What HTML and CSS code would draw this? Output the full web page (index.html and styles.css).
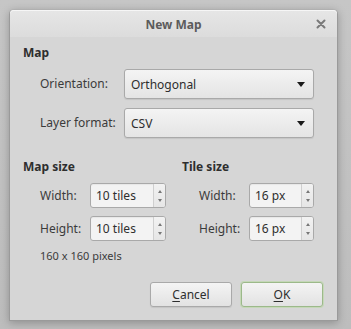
FILE: index.html
```html
<!DOCTYPE html>
<html>
<head>
<meta charset="utf-8">
<link rel="stylesheet" href="styles.css">
</head>
<body>
<div class="window">
  <div class="titlebar">
    <span class="title">New Map</span>
    <span class="close">
      <svg width="10" height="10" viewBox="0 0 10 10"><path d="M1.5 1.5 L8.5 8.5 M8.5 1.5 L1.5 8.5" stroke="#7a7a7a" stroke-width="2" stroke-linecap="round"/></svg>
    </span>
  </div>
  <div class="content">
    <div class="heading">Map</div>
    <div class="map-form">
      <span class="label">Orientation:</span>
      <div class="combo"><span>Orthogonal</span><span class="arrow"></span></div>
      <span class="label">Layer format:</span>
      <div class="combo"><span>CSV</span><span class="arrow"></span></div>
    </div>
    <div class="sizes">
      <div class="size-group">
        <div class="heading">Map size</div>
        <div class="size-form">
          <span class="label">Width:</span>
          <div class="spin wide"><span class="val">10 tiles</span><span class="btns"><span class="up"></span><span class="down"></span></span></div>
          <span class="label">Height:</span>
          <div class="spin wide"><span class="val">10 tiles</span><span class="btns"><span class="up"></span><span class="down"></span></span></div>
        </div>
      </div>
      <div class="size-group">
        <div class="heading">Tile size</div>
        <div class="size-form">
          <span class="label">Width:</span>
          <div class="spin"><span class="val">16 px</span><span class="btns"><span class="up"></span><span class="down"></span></span></div>
          <span class="label">Height:</span>
          <div class="spin"><span class="val">16 px</span><span class="btns"><span class="up"></span><span class="down"></span></span></div>
        </div>
      </div>
    </div>
    <div class="pixels">160 x 160 pixels</div>
    <div class="buttons">
      <button class="btn"><u>C</u>ancel</button>
      <button class="btn default"><u>O</u>K</button>
    </div>
  </div>
</div>
</body>
</html>
```

FILE: styles.css
```css
html, body {
  margin: 0;
  padding: 0;
}
body {
  width: 351px;
  height: 329px;
  background: linear-gradient(180deg, #c6c6c6 0%, #bdbdbd 100%);
  font-family: "Noto Sans", "Open Sans", sans-serif;
  font-size: 12px;
  color: #3b3b3b;
  padding: 9px 13px 8px 9px;
  box-sizing: border-box;
}
.window {
  width: 329px;
  height: 312px;
  background: #d6d6d6;
  border: 1px solid #9a9a9a;
  border-top-color: #b0b0b0;
  border-radius: 5px 5px 0 0;
  box-sizing: border-box;
  box-shadow: 0 2px 8px rgba(0,0,0,0.25);
  display: flex;
  flex-direction: column;
}
.titlebar {
  height: 27px;
  display: flex;
  align-items: center;
  justify-content: center;
  position: relative;
  background: linear-gradient(180deg, #e6e6e6 0%, #dcdcdc 100%);
  border-radius: 4px 4px 0 0;
  box-shadow: inset 0 1px 0 #f6f6f6;
}
.title {
  font-weight: bold;
  font-size: 12px;
  color: #5c5c5c;
  padding-top: 1px;
}
.close {
  position: absolute;
  right: 11px;
  top: 9px;
  width: 10px;
  height: 10px;
  display: flex;
}
.content {
  padding: 8px 14px 13px 13px;
  display: flex;
  flex-direction: column;
  flex: 1;
}
.heading {
  font-weight: bold;
  line-height: 16px;
  color: #2e2e2e;
}
.map-form {
  display: grid;
  grid-template-columns: 84px 190px;
  row-gap: 9px;
  align-items: center;
  margin: 8px 0 0 17px;
}
.label {
  color: #3b3b3b;
  line-height: 16px;
}
.combo {
  height: 30px;
  box-sizing: border-box;
  border: 1px solid #a9a9a9;
  border-radius: 3px;
  background: linear-gradient(180deg, #f4f4f4 0%, #e4e4e4 100%);
  box-shadow: 0 1px 1px rgba(0,0,0,0.08);
  display: flex;
  align-items: center;
  justify-content: space-between;
  padding: 0 8px 0 6px;
  color: #2e2e2e;
}
.arrow {
  width: 0;
  height: 0;
  border-left: 4px solid transparent;
  border-right: 4px solid transparent;
  border-top: 5px solid #1a1a1a;
  margin-top: 1px;
}
.sizes {
  display: flex;
  margin-top: 21px;
}
.size-group {
  flex: 0 0 159px;
}
.size-group + .size-group {
  flex: 1 1 auto;
}
.size-form {
  display: grid;
  grid-template-columns: 50px auto;
  row-gap: 8px;
  align-items: center;
  margin: 8px 0 0 17px;
  justify-content: start;
}
.spin {
  width: 65px;
  height: 25px;
  box-sizing: border-box;
  border: 1px solid #a9a9a9;
  border-radius: 3px;
  background: #f3f3f3;
  display: flex;
  align-items: stretch;
  box-shadow: inset 0 1px 1px rgba(0,0,0,0.05);
}
.spin.wide {
  width: 76px;
}
.val {
  flex: 1;
  display: flex;
  align-items: center;
  padding-left: 5px;
  color: #2e2e2e;
}
.btns {
  width: 12px;
  border-left: 1px solid #cfcfcf;
  background: linear-gradient(180deg, #f2f2f2 0%, #e6e6e6 100%);
  border-radius: 0 2px 2px 0;
  display: flex;
  flex-direction: column;
  align-items: center;
  justify-content: space-between;
  padding: 6px 0 5px;
  box-sizing: border-box;
}
.up {
  width: 0; height: 0;
  border-left: 2px solid transparent;
  border-right: 2px solid transparent;
  border-bottom: 3px solid #777;
}
.down {
  width: 0; height: 0;
  border-left: 2px solid transparent;
  border-right: 2px solid transparent;
  border-top: 3px solid #777;
}
.pixels {
  font-size: 11px;
  line-height: 15px;
  margin: 7px 0 0 17px;
  color: #3b3b3b;
}
.buttons {
  display: flex;
  justify-content: flex-end;
  gap: 9px;
  margin-top: auto;
  padding-right: 0;
}
.btn {
  width: 82px;
  height: 25px;
  box-sizing: border-box;
  border: 1px solid #a9a9a9;
  border-radius: 3px;
  background: linear-gradient(180deg, #f4f4f4 0%, #e2e2e2 100%);
  font-family: "Noto Sans", "Open Sans", sans-serif;
  font-size: 12px;
  color: #2e2e2e;
  padding: 0;
  box-shadow: 0 1px 1px rgba(0,0,0,0.08);
}
.btn u {
  text-underline-offset: 2px;
}
.btn.default {
  border-color: #9cb98a;
  box-shadow: 0 0 0 1px #c5d8b8;
}
```
